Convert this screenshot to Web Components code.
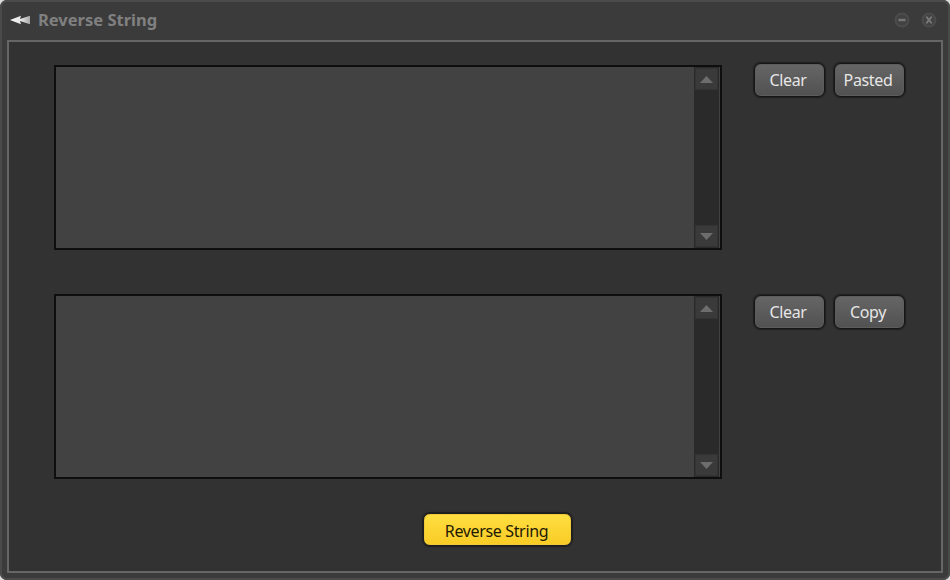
<!DOCTYPE html>
<html>
<head>
<meta charset="utf-8">
<title>Reverse String</title>
<style>
  html, body { margin: 0; padding: 0; background: #dcdcdc; }
  body { width: 950px; height: 580px; overflow: hidden; font-family: "Noto Sans", "Open Sans", sans-serif; }
  text-row.second { --btn-top: 1px; }
</style>
</head>
<body>
<app-window heading="Reverse String">
  <text-row>
    <skin-button>Clear</skin-button>
    <skin-button>Pasted</skin-button>
  </text-row>
  <text-row class="second">
    <skin-button>Clear</skin-button>
    <skin-button>Copy</skin-button>
  </text-row>
  <skin-button slot="action" kind="primary">Reverse String</skin-button>
</app-window>

<script>
class SkinButton extends HTMLElement {
  constructor() {
    super();
    const primary = this.getAttribute("kind") === "primary";
    const shadow = this.attachShadow({ mode: "open" });
    shadow.innerHTML = `
    <style>
      :host { display: block; box-sizing: border-box; }
      button {
        display: flex; align-items: center; justify-content: center;
        box-sizing: border-box; width: ${primary ? 149 : 71}px; height: ${primary ? 33 : 34}px;
        margin: 0; padding: ${primary ? "2px 2px 0 0" : "0 3px 1px 0"};
        font: 400 16px "Noto Sans", "Open Sans", sans-serif; letter-spacing: -0.35px;
        border-radius: 7px;
        border: 1px solid ${primary ? "#1f1f1f" : "#161616"};
        color: ${primary ? "#1e1a05" : "#e6e6e6"};
        background: ${primary ? "linear-gradient(#ffdf41, #f9cb25)" : "linear-gradient(#666666, #515151)"};
        box-shadow: inset 0 0 0 1px ${primary ? "#f0c93a" : "#5d5d5d"}, 0 0 1px 1px #1e1e1e;
      }
    </style>
    <button type="button"><slot></slot></button>`;
  }
}

class TextBox extends HTMLElement {
  constructor() {
    super();
    const shadow = this.attachShadow({ mode: "open" });
    shadow.innerHTML = `
    <style>
      :host {
        display: flex; box-sizing: border-box; width: 668px; height: 185px;
        border: 2px solid #0e0e0e; background: #424242;
        padding-right: 1px;
      }
      .text { flex: 1; }
      .bar {
        width: 25px; display: flex; flex-direction: column; justify-content: space-between;
        background: #2a2a2a;
      }
      .arrow {
        height: 22px; display: flex; align-items: center; justify-content: center;
        background: #3a3a3a; border: 1px solid #333; box-sizing: border-box; margin: 1px;
      }
      svg { width: 13px; height: 7px; fill: #6d6d6d; }
    </style>
    <div class="text"></div>
    <div class="bar">
      <div class="arrow"><svg viewBox="0 0 13 7"><path d="M6.5 0 L13 7 H0 Z"/></svg></div>
      <div class="arrow"><svg viewBox="0 0 13 7"><path d="M0 0 H13 L6.5 7 Z"/></svg></div>
    </div>`;
  }
}

class TextRow extends HTMLElement {
  constructor() {
    super();
    const shadow = this.attachShadow({ mode: "open" });
    shadow.innerHTML = `
    <style>
      :host { display: flex; align-items: flex-start; }
      .buttons { display: flex; gap: 9px; margin-left: 32px; margin-top: var(--btn-top, -2px); }
    </style>
    <text-box></text-box>
    <div class="buttons"><slot></slot></div>`;
  }
}

class AppWindow extends HTMLElement {
  constructor() {
    super();
    const shadow = this.attachShadow({ mode: "open" });
    shadow.innerHTML = `
    <style>
      :host {
        display: flex; flex-direction: column; box-sizing: border-box; width: 950px; height: 580px;
        background: #3b3b3b; border-radius: 7px;
        box-shadow: inset 0 0 0 2px #4a4a4a; padding: 0 7px 7px 7px;
      }
      .title { height: 40px; flex: none; display: flex; align-items: center; padding-left: 3px; }
      .logo { width: 20px; height: 10px; margin-right: 8px; }
      h1 { margin: 0 0 2px; font: 700 16.5px "Noto Sans", "Open Sans", sans-serif; color: #808080; flex: 1; }
      .ctl { width: 16px; height: 16px; margin-right: 11px; fill: none; }
      .ctl:last-child { margin-right: 6px; }
      .panel {
        flex: 1; box-sizing: border-box; border: 2px solid #666666; background: #323232;
        padding: 23px 0 0 45px; display: flex; flex-direction: column; gap: 44px;
      }
      .action { display: flex; justify-content: flex-start; margin: -10px 0 0 369px; }
    </style>
    <div class="title">
      <svg class="logo" viewBox="0 0 20 10">
        <defs><linearGradient id="fade"><stop offset="0" stop-color="#f6f6f6"/><stop offset="0.55" stop-color="#e6e6e6"/><stop offset="1" stop-color="#a8a8a8"/></linearGradient></defs>
        <path fill="url(#fade)" d="M0 5 L11 0.8 L10 4 L20 0.8 V9.2 L10 6 L11 9.2 Z"/>
      </svg>
      <h1></h1>
      <svg class="ctl" viewBox="0 0 16 16"><circle cx="8" cy="8" r="7.5" fill="#4c4c4c"/><circle cx="8" cy="8" r="5.5" fill="#424242"/><rect x="4.5" y="6.8" width="7" height="2.4" fill="#787878"/></svg>
      <svg class="ctl" viewBox="0 0 16 16"><circle cx="8" cy="8" r="7.5" fill="#4c4c4c"/><circle cx="8" cy="8" r="5.5" fill="#424242"/><path d="M5.3 4.6 L10.7 11.4 M10.7 4.6 L5.3 11.4" stroke="#787878" stroke-width="1.8"/></svg>
    </div>
    <div class="panel">
      <slot></slot>
      <div class="action"><slot name="action"></slot></div>
    </div>`;
    shadow.querySelector("h1").textContent = this.getAttribute("heading");
  }
}

customElements.define("skin-button", SkinButton);
customElements.define("text-box", TextBox);
customElements.define("text-row", TextRow);
customElements.define("app-window", AppWindow);
</script>
</body>
</html>
